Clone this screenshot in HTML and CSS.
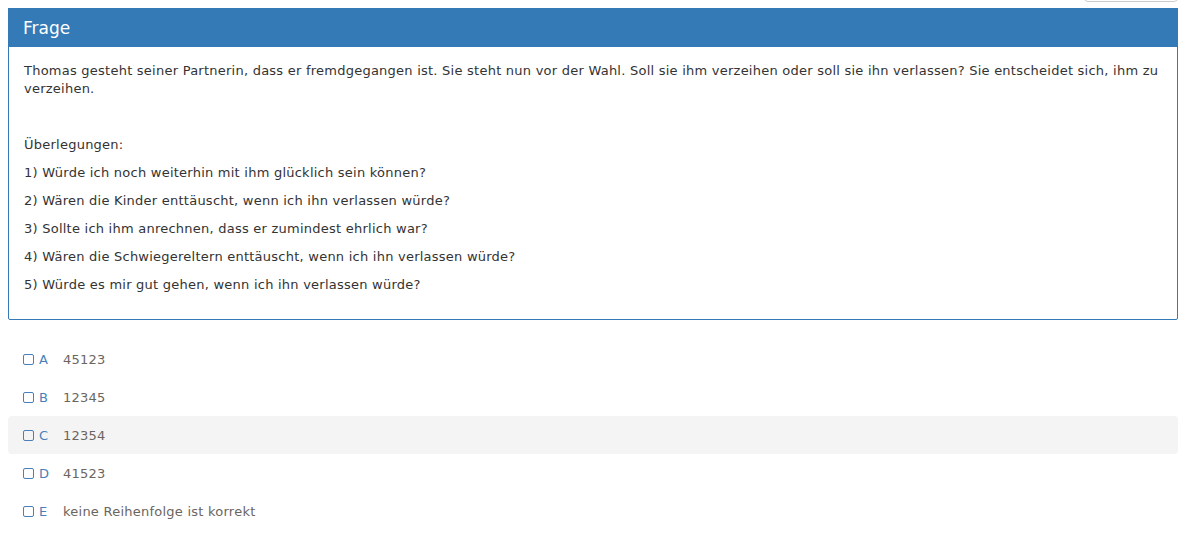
FILE: index.html
```html
<!DOCTYPE html>
<html lang="de">
<head>
<meta charset="utf-8">
<link rel="stylesheet" href="styles.css">
</head>
<body>
<div class="wrap">
  <div class="top-btn"></div>
  <div class="panel">
    <div class="panel-heading">Frage</div>
    <div class="panel-body">
      <p>Thomas gesteht seiner Partnerin, dass er fremdgegangen ist. Sie steht nun vor der Wahl. Soll sie ihm verzeihen oder soll sie ihn verlassen? Sie entscheidet sich, ihm zu verzeihen.</p>
      <p class="empty"></p>
      <p>Überlegungen:</p>
      <p>1) Würde ich noch weiterhin mit ihm glücklich sein können?</p>
      <p>2) Wären die Kinder enttäuscht, wenn ich ihn verlassen würde?</p>
      <p>3) Sollte ich ihm anrechnen, dass er zumindest ehrlich war?</p>
      <p>4) Wären die Schwiegereltern enttäuscht, wenn ich ihn verlassen würde?</p>
      <p>5) Würde es mir gut gehen, wenn ich ihn verlassen würde?</p>
    </div>
  </div>
  <ul class="answers">
    <li class="answer"><span class="box"></span><span class="letter">A</span><span class="val">45123</span></li>
    <li class="answer"><span class="box"></span><span class="letter">B</span><span class="val">12345</span></li>
    <li class="answer hover"><span class="box"></span><span class="letter">C</span><span class="val">12354</span></li>
    <li class="answer"><span class="box"></span><span class="letter">D</span><span class="val">41523</span></li>
    <li class="answer"><span class="box"></span><span class="letter">E</span><span class="val">keine Reihenfolge ist korrekt</span></li>
  </ul>
</div>
</body>
</html>
```
FILE: styles.css
```css
html, body { margin: 0; padding: 0; background: #fff; }
body {
  font-family: "DejaVu Sans", Verdana, sans-serif;
  font-size: 13px;
  letter-spacing: 0.24px;
  color: #333;
  overflow: hidden;
}
.wrap {
  position: relative;
  width: 1170px;
  margin: 8px 0 0 8px;
}
.top-btn {
  position: absolute;
  top: -48px;
  right: 0;
  width: 94px;
  height: 42px;
  border: 1px solid #ccc;
  border-radius: 4px;
  box-sizing: border-box;
  background: #fff;
}
.panel {
  border: 1px solid #337ab7;
  border-radius: 2px;
}
.panel-heading {
  background: #337ab7;
  color: #fff;
  font-size: 17px;
  letter-spacing: 0;
  height: 39px;
  line-height: 40px;
  padding: 0 15px;
  box-sizing: border-box;
  margin: -1px -1px 0 -1px;
}
.panel-body {
  padding: 15px 15px 15px 15px;
}
.panel-body p {
  margin: 0 0 10px 0;
  line-height: 18px;
}
.panel-body p.empty { height: 18px; }
.answers {
  list-style: none;
  margin: 20px 0 0 0;
  padding: 0;
}
.answer {
  display: flex;
  align-items: center;
  height: 38px;
  padding: 0 15px;
  border-radius: 4px;
  font-size: 13px;
}
.answer.hover { background: #f4f4f4; }
.box {
  width: 9px;
  height: 9px;
  border: 1px solid #4a7fb8;
  border-radius: 2px;
  margin-right: 5px;
  box-sizing: content-box;
}
.letter {
  color: #4a7fb8;
  width: 24px;
}
.val { color: #6b6560; }
```
